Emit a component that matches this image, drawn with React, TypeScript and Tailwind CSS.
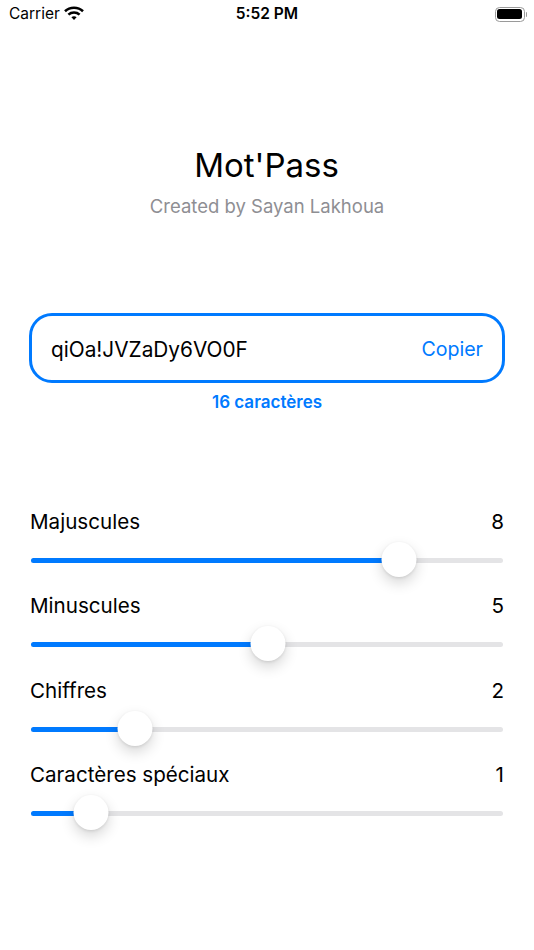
const sliders = [
	{ label: "Majuscules", value: 8, thumb: 368 },
	{ label: "Minuscules", value: 5, thumb: 237 },
	{ label: "Chiffres", value: 2, thumb: 104 },
	{ label: "Caractères spéciaux", value: 1, thumb: 60 },
];

function StatusBar() {
	return (
		<div className="relative flex h-[28px] items-center justify-between pl-[9px] pr-[7px] text-[15.5px] text-black">
			<div className="flex items-center gap-[5px]">
				<span>Carrier</span>
				<svg width="20" height="15" viewBox="0 0 20 15" fill="none" className="-mt-[1px] -ml-[1px]">
					<path d="M1 5.2C5.9 0.6 14.1 0.6 19 5.2" stroke="#000" strokeWidth="2.6" />
					<path d="M4.4 8.6C7.5 5.8 12.5 5.8 15.6 8.6" stroke="#000" strokeWidth="2.6" />
					<path d="M7.4 11.2C8.9 10 11.1 10 12.6 11.2L10 14Z" fill="#000" />
				</svg>
			</div>
			<span className="absolute left-0 right-0 text-center font-semibold">5:52 PM</span>
			<div className="flex items-center">
				<div className="flex h-[15px] w-[30px] items-center rounded-[4.5px] border border-[#9a9a9a] p-[1.5px]">
					<div className="h-full w-full rounded-[2.5px] bg-black" />
				</div>
				<div className="ml-[1px] h-[5px] w-[1.5px] rounded-r-full bg-[#9a9a9a]" />
			</div>
		</div>
	);
}

function SliderRow({ label, value, thumb }: { label: string; value: number; thumb: number }) {
	return (
		<div className="h-[84.3px]">
			<div className="flex h-[27px] items-center justify-between text-[20.6px] leading-[27px] text-black">
				<span>{label}</span>
				<span>{value}</span>
			</div>
			<div className="relative mx-[1px] mt-[23px] h-[5px] rounded-full bg-[#e4e4e6]">
				<div className="h-full rounded-full bg-[#007aff]" style={{ width: thumb }} />
				<div
					className="absolute top-[-16px] h-[35px] w-[35px] -translate-x-1/2 rounded-full bg-white shadow-[0_6px_14px_rgba(0,0,0,0.16),0_1px_3px_rgba(0,0,0,0.1)]"
					style={{ left: thumb }}
				/>
			</div>
		</div>
	);
}

export default function App() {
	return (
		<div className="h-[950px] w-[534px] overflow-hidden bg-white font-['Inter',sans-serif]">
			<StatusBar />

			<div className="mt-[116px] text-center">
				<h1 className="-ml-[1px] text-[33px] leading-[42px] text-black">Mot'Pass</h1>
				<p className="mt-[8px] text-[18.5px] leading-[24px] text-[#8e8e93]">Created by Sayan Lakhoua</p>
			</div>

			<div className="mx-[29px] mt-[95px]">
				<div className="flex h-[70px] items-center justify-between rounded-[23px] border-[3px] border-[#007aff] pl-[19px] pr-[19px] text-[20.8px]">
					<span className="mt-[3px] text-black">qiOa!JVZaDy6VO0F</span>
					<span className="mt-[3px] text-[19.6px] text-[#007aff]">Copier</span>
				</div>
				<p className="mt-[8px] text-center text-[17px] font-semibold leading-[22px] text-[#007aff]">16 caractères</p>
			</div>

			<div className="mx-[30px] mt-[95px]">
				{sliders.map((s) => (
					<SliderRow key={s.label} {...s} />
				))}
			</div>
		</div>
	);
}
